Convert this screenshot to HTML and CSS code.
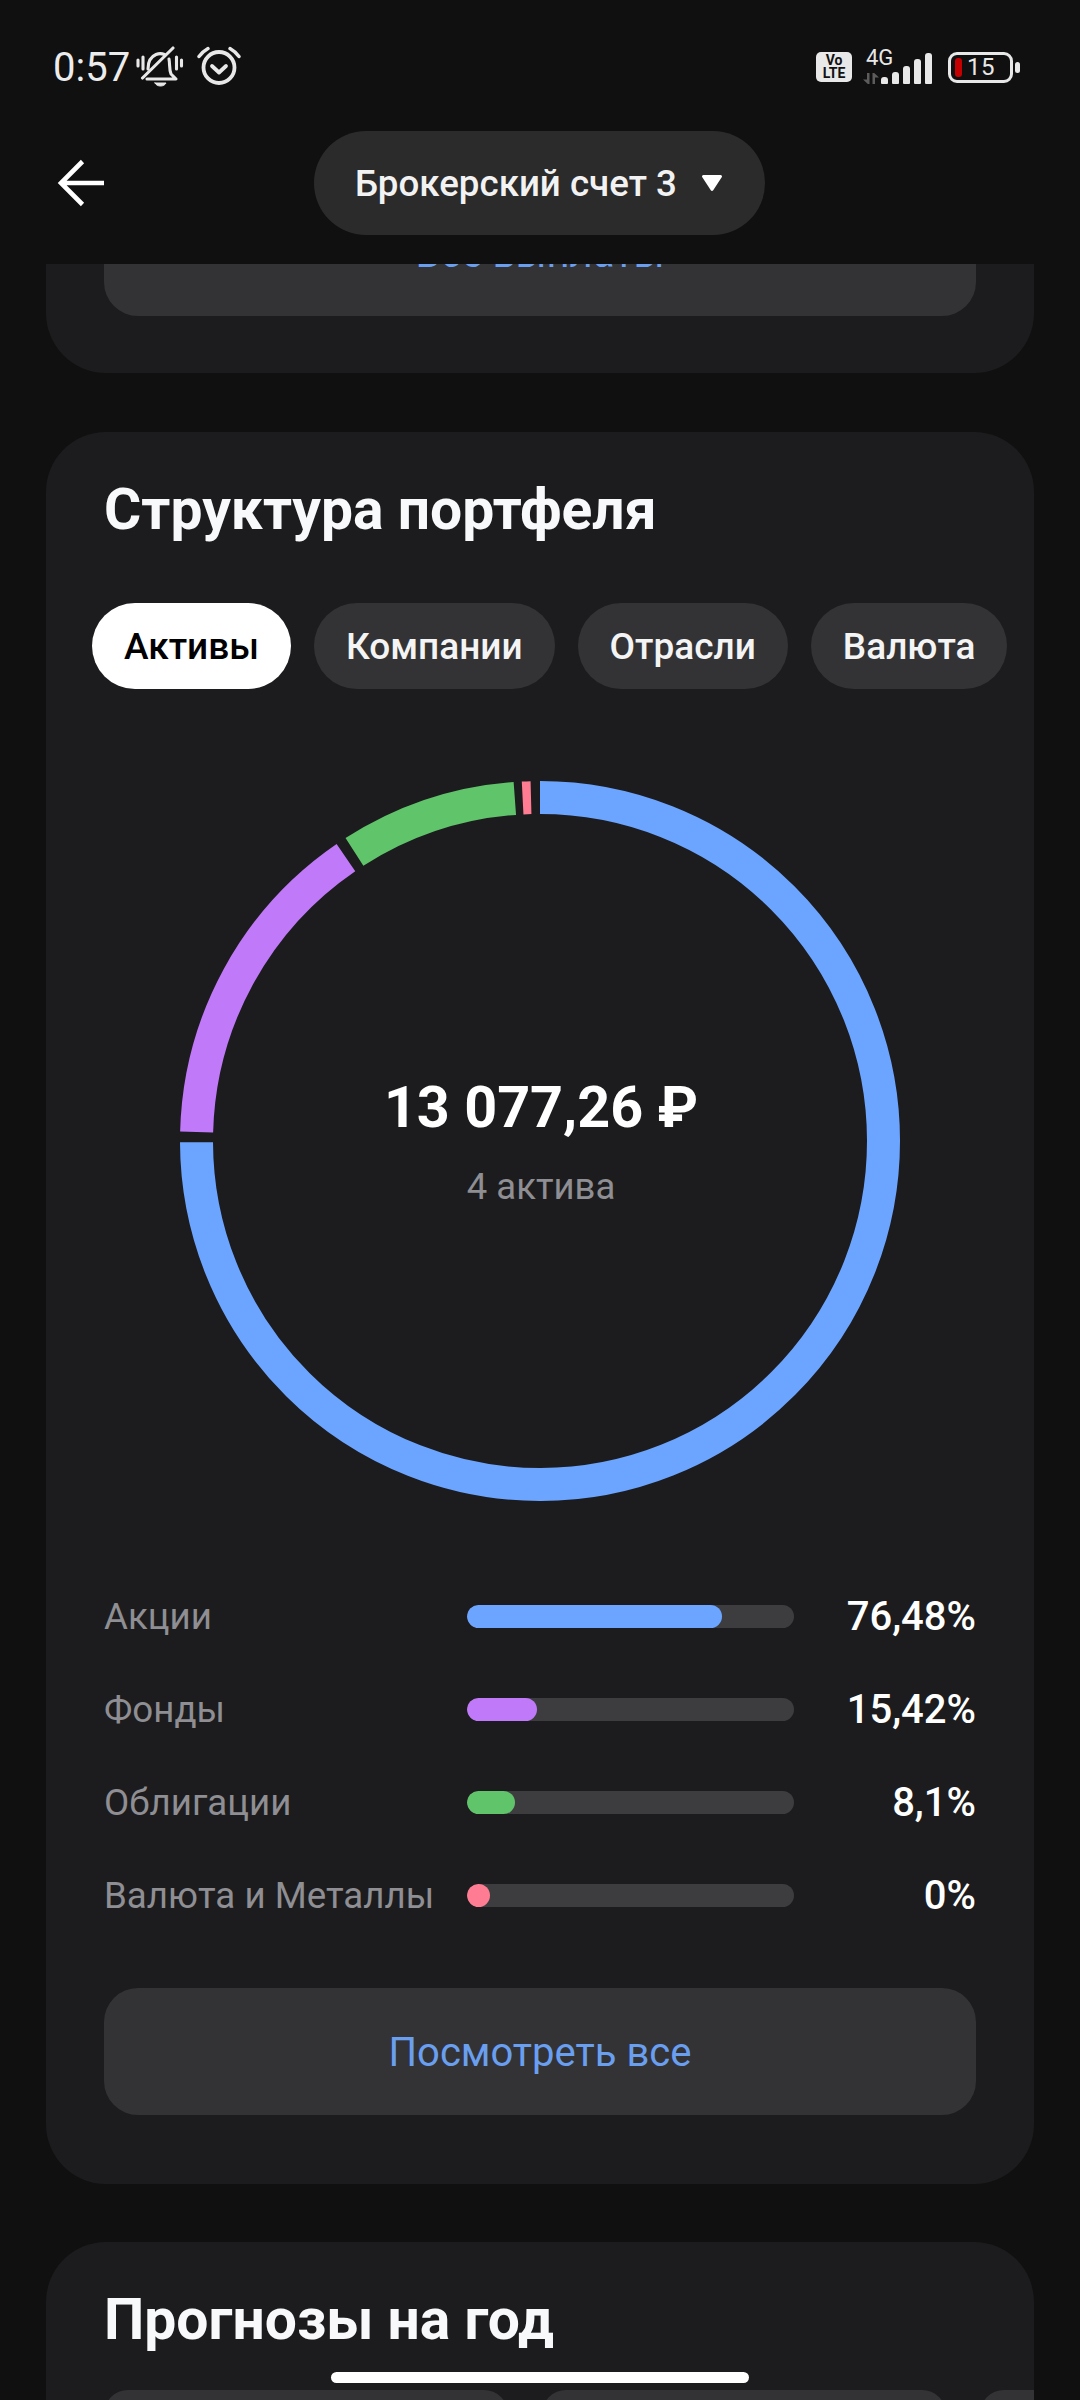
FILE: index.html
```html
<!DOCTYPE html>
<html lang="ru">
<head>
<meta charset="utf-8">
<title>Брокерский счет 3</title>
<link rel="stylesheet" href="styles.css">
</head>
<body>
<div class="screen">
  <header class="header">
    <div class="status">
      <div class="status-left">
        <span class="time">0:57</span>
        <svg class="ic-bell" viewBox="0 0 50 42" fill="none" stroke="#e8e8e8" stroke-width="3.100" stroke-linecap="round" stroke-linejoin="round">
          <path d="M3 14v6M8 11v12M41.500 11v12M46.500 14v6"/>
          <path d="M7.500 32 38 2"/>
          <path d="M13 23c0-7 2-12 8-14.500 3-1.200 6-1 8.500 0"/>
          <path d="M34 13c1 5 0 10 2 15l5 5H12"/>
          <path d="M20 37h11c-1 2-3 3-5.500 3s-4.500-1-5.500-3z" fill="#e8e8e8" stroke-width="1"/>
        </svg>
        <svg class="ic-alarm" viewBox="0 0 44 40" fill="none" stroke="#e8e8e8" stroke-linecap="round" stroke-linejoin="round">
          <circle cx="22" cy="22.500" r="15.500" stroke-width="3.800"/>
          <path d="M15 21l7 6.500 7-6.500" stroke-width="3.800"/>
          <path d="M2 11.500C4.500 8 7.500 5.500 11 3.500M33 3.500c3.500 2 6.500 4.500 9 8" stroke-width="3.400"/>
        </svg>
      </div>
      <div class="status-right">
        <div class="volte"><span>Vo</span><span>LTE</span></div>
        <div class="net">
          <span class="net-label">4G</span>
          <svg class="ic-arrows" viewBox="0 0 16 11" fill="#5c5c5c"><path d="M4 0h2.500v11H4.800L0 6.500h4zM9.500 0h1.700L16 4.500h-4V11H9.500z"/></svg>
        </div>
        <div class="bars">
          <i class="bar b1"></i><i class="bar b2"></i><i class="bar b3"></i><i class="bar b4"></i><i class="bar b5"></i>
        </div>
        <div class="battery">
          <div class="battery-body"><i class="battery-fill"></i><span class="battery-num">15</span></div>
          <i class="battery-nub"></i>
        </div>
      </div>
    </div>
    <nav class="nav">
      <svg class="ic-back" viewBox="0 0 50 48" fill="none" stroke="#fff" stroke-width="4.600"><path d="M48 24H5M26.500 2.500 5 24l21.500 21.500"/></svg>
      <div class="account"><span>Брокерский счет 3</span><svg class="ic-caret" viewBox="0 0 20 16"><path d="M1.500 0h17a1.400 1.400 0 0 1 1.200 2.200l-8.500 13.100a1.400 1.400 0 0 1-2.400 0L.3 2.200A1.400 1.400 0 0 1 1.500 0z" fill="#fff"/></svg></div>
    </nav>
  </header>

  <main class="scroller">
    <section class="card card-clipped">
      <div class="wide-btn">Все выплаты</div>
    </section>

    <section class="card">
      <h2 class="card-title">Структура портфеля</h2>
      <div class="chips">
        <span class="chip chip-active">Активы</span>
        <span class="chip">Компании</span>
        <span class="chip">Отрасли</span>
        <span class="chip">Валюта</span>
      </div>
      <div class="donut">
        <svg class="donut-svg" viewBox="0 0 720 720" fill="none" stroke-width="33">
          <path class="seg-blue" d="M360 16.500A343.500 343.500 0 1 1 16.500 361.200"/>
          <path class="seg-purple" d="M16.620 351.010A343.500 343.500 0 0 1 165.920 76.570"/>
          <path class="seg-green" d="M174.440 70.940A343.500 343.500 0 0 1 334.840 17.420"/>
          <path class="seg-pink" d="M342.620 16.940A343.500 343.500 0 0 1 351.010 16.620"/>
        </svg>
        <div class="donut-center">
          <div class="donut-sum">13 077,26 ₽</div>
          <div class="donut-sub">4 актива</div>
        </div>
      </div>
      <div class="rows">
        <div class="row"><span class="row-label">Акции</span><div class="track"><i class="fill fill-blue" style="--share:.7648"></i></div><span class="row-value">76,48%</span></div>
        <div class="row"><span class="row-label">Фонды</span><div class="track"><i class="fill fill-purple" style="--share:.1542"></i></div><span class="row-value">15,42%</span></div>
        <div class="row"><span class="row-label">Облигации</span><div class="track"><i class="fill fill-green" style="--share:.081"></i></div><span class="row-value">8,1%</span></div>
        <div class="row"><span class="row-label">Валюта и Металлы</span><div class="track"><i class="fill fill-pink" style="--share:0"></i></div><span class="row-value">0%</span></div>
      </div>
      <div class="wide-btn wide-btn-spaced">Посмотреть все</div>
    </section>

    <section class="card card-last">
      <h2 class="card-title">Прогнозы на год</h2>
      <div class="tiles">
        <div class="tile"></div>
        <div class="tile"></div>
        <div class="tile"></div>
      </div>
    </section>
  </main>

  <div class="home-bar"></div>
</div>
</body>
</html>
```

FILE: styles.css
```css
* { box-sizing: border-box; }
html, body { margin: 0; padding: 0; background: #101010; }
body { font-family: Roboto, "Noto Sans", sans-serif; color: #fff; }

.screen {
  position: relative;
  width: 1080px;
  height: 2400px;
  overflow: hidden;
  background: #101010;
  display: flex;
  flex-direction: column;
}

/* header */
.header { height: 264px; flex: none; background: #101010; }
.status {
  height: 131px;
  padding: 44px 60px 0 53px;
  display: flex;
  justify-content: space-between;
  align-items: flex-start;
}
.status-left, .status-right { height: 42px; display: flex; align-items: center; }
.status-right { margin-top: 2px; }
.time { font-size: 40px; line-height: 42px; color: #ececec; position: relative; top: 3px; }
.ic-bell { width: 50px; height: 42px; margin-left: 5px; position: relative; top: 2px; }
.ic-alarm { width: 44px; height: 40px; margin-left: 12px; }

.volte {
  width: 36px; height: 30px;
  background: #e8e8e8;
  border-radius: 5px;
  margin-left: 2px;
  display: flex; flex-direction: column; align-items: center; justify-content: center;
  color: #111;
  font-size: 14px; font-weight: 700; line-height: 13px;
}
.net { width: 30px; height: 34px; margin-left: 11px; position: relative; }
.net-label { position: absolute; left: 3px; top: -3px; font-size: 22px; line-height: 22px; color: #e8e8e8; }
.ic-arrows { position: absolute; left: 0; bottom: 0; width: 16px; height: 11px; }
.bars { display: flex; align-items: flex-end; gap: 4px; height: 31px; margin-left: -12px; margin-top: 2px; }
.bar { display: block; width: 7px; background: #e8e8e8; border-radius: 3px 3px 1px 1px; }
.b1 { height: 7px; } .b2 { height: 12px; } .b3 { height: 18px; } .b4 { height: 25px; } .b5 { height: 31px; }
.battery { display: flex; align-items: center; margin-left: 16px; }
.battery-body {
  width: 65px; height: 31px;
  border: 3px solid #e8e8e8;
  border-radius: 9px;
  display: flex; align-items: center;
  padding-left: 4px;
}
.battery-fill { display: block; width: 7px; height: 19px; background: #c40000; border-radius: 3px; }
.battery-num { font-size: 24px; line-height: 25px; color: #e8e8e8; margin-left: 5px; letter-spacing: .5px; }
.battery-nub { display: block; width: 5px; height: 11px; margin-left: 2px; background: #e8e8e8; border-radius: 3px; }

.nav { height: 104px; display: flex; align-items: center; justify-content: center; position: relative; }
.ic-back { position: absolute; left: 56px; top: 28px; width: 50px; height: 48px; }
.account {
  height: 104px; width: 451px;
  margin-right: 1px;
  background: #2b2b2b;
  border-radius: 52px;
  display: flex; align-items: center;
  padding-left: 41px;
  font-size: 36.700px;
  font-weight: 500;
  color: #f2f2f2;
}
.ic-caret { width: 20px; height: 16px; margin-left: 25px; }

/* content */
.scroller { flex: 1; min-height: 0; overflow: hidden; }
.card {
  width: 988px;
  margin: 0 46px 58px;
  padding: 48px 58px 69px;
  background: #1c1c1e;
  border-radius: 60px;
  overflow: hidden;
}
.card-clipped { margin-top: -100px; margin-bottom: 59px; padding: 25px 58px 57px; }
.card-last { margin-bottom: 0; height: 400px; }
.card-title { margin: 0; font-size: 57px; line-height: 60px; font-weight: 700; color: #f8f9fb; }

.wide-btn {
  height: 127px;
  padding-top: 2px;
  background: #333335;
  border-radius: 34px;
  display: flex; align-items: center; justify-content: center;
  font-size: 40px;
  color: #6a9ff0;
}
.wide-btn-spaced { margin-top: 72px; }

.chips { display: flex; gap: 23px; margin: 63px 0 0 -12px; }
.chip {
  height: 86px;
  padding: 0 32px;
  border-radius: 43px;
  background: #333335;
  display: flex; align-items: center;
  font-size: 37px;
  font-weight: 500;
  color: #f4f4f4;
  white-space: nowrap;
}
.chip-active { background: #fff; color: #000; }

.donut { position: relative; width: 720px; height: 720px; margin: 92px auto 0; }
.donut-svg { display: block; width: 720px; height: 720px; }
.seg-blue { stroke: #6ca5ff; }
.seg-purple { stroke: #c079f9; }
.seg-green { stroke: #60c46b; }
.seg-pink { stroke: #ff7c92; }
.donut-center {
  position: absolute; inset: 0;
  display: flex; flex-direction: column; align-items: center; justify-content: center;
  padding-left: 2px;
}
.donut-sum { font-size: 57.500px; line-height: 70px; font-weight: 700; color: #fff; position: relative; top: -3px; }
.donut-sub { font-size: 36.500px; line-height: 44px; color: #8e8e93; margin-top: 16px; position: relative; top: 3px; }

.rows { margin-top: 95px; display: flex; flex-direction: column; gap: 52px; }
.row { height: 41px; display: grid; grid-template-columns: 363px 327px 1fr; grid-template-rows: 41px; align-items: center; }
.row-label { font-size: 36.700px; line-height: 41px; color: #8e8e93; white-space: nowrap; }
.row-value { font-size: 40px; line-height: 41px; font-weight: 500; color: #fff; text-align: right; }
.track { height: 23px; border-radius: 12px; background: #3d3d40; overflow: hidden; }
.fill {
  display: block; height: 100%;
  width: calc(23px + var(--share) * (100% - 23px));
  border-radius: 12px;
}
.fill-blue { background: #6ca5ff; }
.fill-purple { background: #c079f9; }
.fill-green { background: #60c46b; }
.fill-pink { background: #ff7c92; }

.tiles { display: flex; gap: 34px; margin: 40px -58px 0 0; }
.tile { flex: none; width: 404px; height: 120px; background: #333335; border-radius: 24px; }

.home-bar {
  position: absolute;
  left: 331px; top: 2372px;
  width: 418px; height: 11px;
  background: #fff;
  border-radius: 6px;
}
```
